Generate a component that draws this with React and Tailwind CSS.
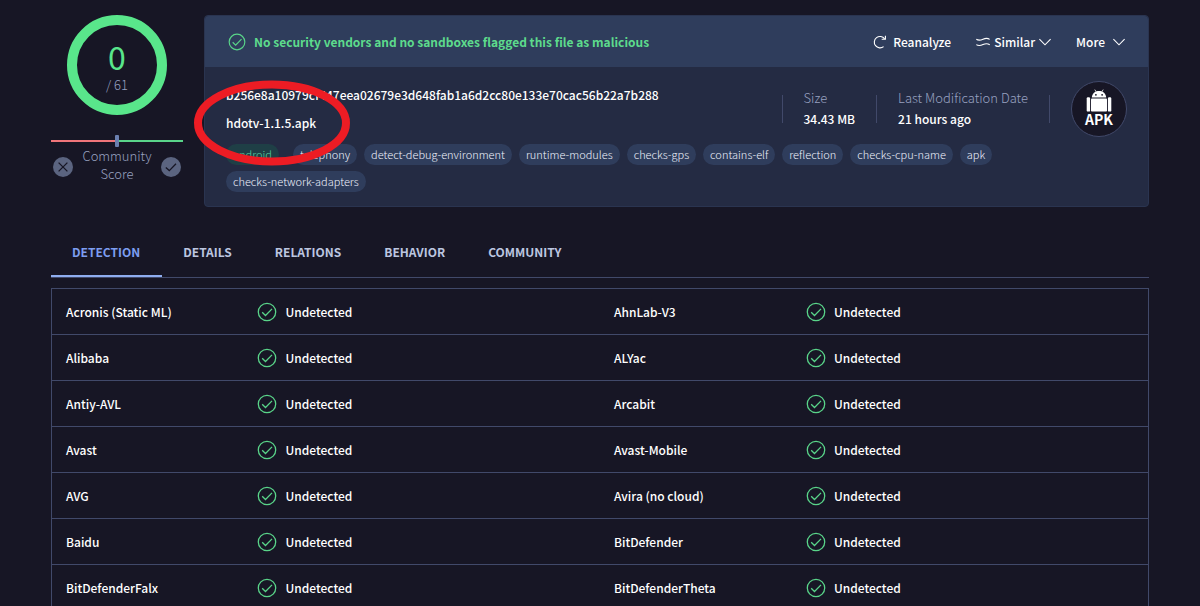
import React from "react";

const TAGS = [
  "telephony",
  "detect-debug-environment",
  "runtime-modules",
  "checks-gps",
  "contains-elf",
  "reflection",
  "checks-cpu-name",
  "apk",
  "checks-network-adapters",
];

const TABS = ["DETECTION", "DETAILS", "RELATIONS", "BEHAVIOR", "COMMUNITY"];

const ROWS = [
  ["Acronis (Static ML)", "AhnLab-V3"],
  ["Alibaba", "ALYac"],
  ["Antiy-AVL", "Arcabit"],
  ["Avast", "Avast-Mobile"],
  ["AVG", "Avira (no cloud)"],
  ["Baidu", "BitDefender"],
  ["BitDefenderFalx", "BitDefenderTheta"],
];

function CheckCircle({ className }) {
  return (
    <svg viewBox="0 0 20 20" fill="none" stroke="currentColor" className={className} aria-hidden="true">
      <circle cx="10" cy="10" r="8.7" strokeWidth="1.3" />
      <path d="M5.2 10.3 8.5 13.5 15 6.9" strokeWidth="1.3" />
    </svg>
  );
}

function Chevron() {
  return (
    <svg viewBox="0 0 12 12" fill="none" stroke="currentColor" strokeWidth="1.1" className="h-3 w-3" aria-hidden="true">
      <path d="M0.4 3.2 6 8.8 11.6 3.2" />
    </svg>
  );
}

function ReanalyzeIcon() {
  return (
    <svg viewBox="0 0 14 14" fill="none" stroke="currentColor" strokeWidth="1.1" className="h-3.5 w-3.5" aria-hidden="true">
      <path d="M10.6 11.6A5.7 5.7 0 1 1 11.6 3.8" />
      <path d="M12.4 0.8V4.3H8.7" />
    </svg>
  );
}

function SimilarIcon() {
  return (
    <svg viewBox="0 0 14 14" fill="none" stroke="currentColor" strokeWidth="1.1" className="h-3.5 w-3.5" aria-hidden="true">
      <path d="M0.3 4.2C2.6 5.8 4.4 5.4 7 4.2S11.2 2.6 13.7 4.4" />
      <path d="M0.3 9.6C2.6 11.2 4.4 10.8 7 9.6S11.2 8 13.7 9.8" />
    </svg>
  );
}

function AndroidIcon() {
  return (
    <svg viewBox="0 0 26 24" className="h-6 w-[26px]" fill="#fff" aria-hidden="true">
      <path d="M8.8 0.6 10.3 3M17.2 0.6 15.7 3" stroke="#fff" strokeWidth="0.8" />
      <path d="M5.8 8.6C6 4.6 9 2 13 2S20 4.6 20.2 8.6Z" />
      <circle cx="9.9" cy="5.8" r="0.9" fill="#171625" />
      <circle cx="16.1" cy="5.8" r="0.9" fill="#171625" />
      <rect x="5" y="9.6" width="16" height="13" rx="0.8" />
      <rect x="0.7" y="8.2" width="3.4" height="14.4" rx="1.2" />
      <rect x="21.9" y="8.2" width="3.4" height="14.4" rx="1.2" />
    </svg>
  );
}

function ScorePanel() {
  return (
    <aside className="flex w-[132px] shrink-0 flex-col">
      <div className="flex h-[100px] w-[100px] flex-col items-center self-center rounded-full border-10 border-[#59e68b] pt-4">
        <span className="text-[32px] leading-[30px] text-[#59e68b]">0</span>
        <span className="text-[13px] leading-7 font-light text-[#98a1c0]">/ 61</span>
      </div>
      <div className="mt-5 flex h-3 items-center">
        <div className="h-0.5 flex-1 bg-[#f0757a]" />
        <div className="h-3 w-1 rounded-[1px] bg-[#6b80b0]" />
        <div className="h-0.5 flex-1 bg-[#59d489]" />
      </div>
      <div className="flex items-center justify-between px-0.5">
        <button type="button" aria-label="Vote malicious" className="mt-1">
          <svg viewBox="0 0 20 20" className="h-5 w-5" aria-hidden="true">
            <circle cx="10" cy="10" r="10" fill="#5b6480" />
            <path d="M5.6 5.6 14.4 14.4M14.4 5.6 5.6 14.4" stroke="#171625" strokeWidth="1.3" />
          </svg>
        </button>
        <p className="text-center text-[13px] leading-[18px] font-light text-[#98a1c0]">
          Community
          <br />
          Score
        </p>
        <button type="button" aria-label="Vote harmless" className="mt-1">
          <svg viewBox="0 0 20 20" className="h-5 w-5" aria-hidden="true">
            <circle cx="10" cy="10" r="10" fill="#5b6480" />
            <path d="M4.8 10.4 8.3 13.6 15 6.8" fill="none" stroke="#171625" strokeWidth="1.3" />
          </svg>
        </button>
      </div>
    </aside>
  );
}

function Fact({ label, value }) {
  return (
    <div className="pt-1.5">
      <dt className="text-[13px] leading-[21px] font-light text-[#98a1c0]">{label}</dt>
      <dd className="text-xs leading-[21px] font-medium">{value}</dd>
    </div>
  );
}

function Divider() {
  return <div className="mt-3.5 h-7 w-px bg-[#41496a]" />;
}

function FileCard() {
  return (
    <section className="relative flex-1 rounded-sm border border-[#2a3450] bg-[#242b43]">
      <header className="flex h-[51px] items-center rounded-t-sm bg-[#2f3d5c] px-[23px] text-xs">
        <CheckCircle className="h-[18px] w-[18px] text-[#59d489]" />
        <strong className="ml-2 flex-1 font-bold text-[#5ddb8c]">
          No security vendors and no sandboxes flagged this file as malicious
        </strong>
        <button type="button" className="flex items-center gap-1.5 font-medium">
          <ReanalyzeIcon />
          Reanalyze
        </button>
        <button type="button" className="ml-[25px] flex items-center gap-1 font-medium">
          <SimilarIcon />
          Similar
          <Chevron />
        </button>
        <button type="button" className="ml-[25px] flex items-center gap-2 font-medium">
          More
          <Chevron />
        </button>
      </header>
      <div className="px-[21px] py-3.5">
        <div className="flex h-[63px]">
          <div className="flex-1 text-xs leading-7 font-medium">
            <p>b256e8a10979cf447eea02679e3d648fab1a6d2cc80e133e70cac56b22a7b288</p>
            <p>hdotv-1.1.5.apk</p>
          </div>
          <div className="flex gap-[21px]">
            <Divider />
            <dl>
              <Fact label="Size" value="34.43 MB" />
            </dl>
            <Divider />
            <dl>
              <Fact label="Last Modification Date" value="21 hours ago" />
            </dl>
            <Divider />
            <div className="flex h-14 w-14 flex-col items-center rounded-full border border-[#41496a] bg-[#171625] pt-[7px]">
              <AndroidIcon />
              <span className="text-sm leading-3 font-bold">APK</span>
            </div>
          </div>
        </div>
        <ul className="flex flex-wrap gap-x-[7px] gap-y-1.5 text-[11px] leading-[21px] font-light text-[#eef2fc]">
          <li className="mr-[7px] rounded-full bg-[#1f3f46] px-[7px] text-[#59d0a0]">android</li>
          {TAGS.map((tag) => (
            <li key={tag} className="rounded-full bg-[#2f3d5c] px-[7px]">
              {tag}
            </li>
          ))}
        </ul>
      </div>
      <svg
        viewBox="0 0 156 86"
        className="pointer-events-none absolute top-16 -left-[11px] h-[86px] w-[156px]"
        fill="none"
        aria-hidden="true"
      >
        <ellipse cx="78" cy="43" rx="74" ry="38.5" stroke="#ed1c24" strokeWidth="8" />
      </svg>
    </section>
  );
}

function Verdict() {
  return (
    <td>
      <span className="flex items-center gap-2 pl-3.5">
        <CheckCircle className="h-5 w-5 text-[#59d489]" />
        Undetected
      </span>
    </td>
  );
}

export default function App() {
  return (
    <main className="h-screen overflow-hidden bg-[#171625] px-[51px] pt-[15px] font-['Noto_Sans_CJK_SC',sans-serif] text-white">
      <div className="flex items-start gap-[21px]">
        <ScorePanel />
        <FileCard />
      </div>
      <nav className="mt-[21px] flex h-[50px] border-b border-[#41496a] text-xs font-bold">
        {TABS.map((tab, i) => (
          <a
            key={tab}
            href={"#" + tab.toLowerCase()}
            className={
              i === 0
                ? "flex items-center border-b-2 border-[#8fadf0] pr-[22px] pl-[21px] text-[#7c9df0]"
                : "flex items-center border-b-2 border-transparent pr-[22px] pl-[21px] text-[#bcc6e0]"
            }
          >
            {tab}
          </a>
        ))}
      </nav>
      <table className="mt-2.5 w-full table-fixed border-collapse border border-[#41496a] text-xs font-medium">
        <colgroup>
          <col className="w-[17.5%]" />
          <col className="w-[32.5%]" />
          <col className="w-[17.5%]" />
          <col className="w-[32.5%]" />
        </colgroup>
        <tbody>
          {ROWS.map(([left, right]) => (
            <tr key={left} className="h-[46px] border-b border-[#41496a]">
              <td className="pl-3.5">{left}</td>
              <Verdict />
              <td className="pl-3.5">{right}</td>
              <Verdict />
            </tr>
          ))}
        </tbody>
      </table>
    </main>
  );
}
